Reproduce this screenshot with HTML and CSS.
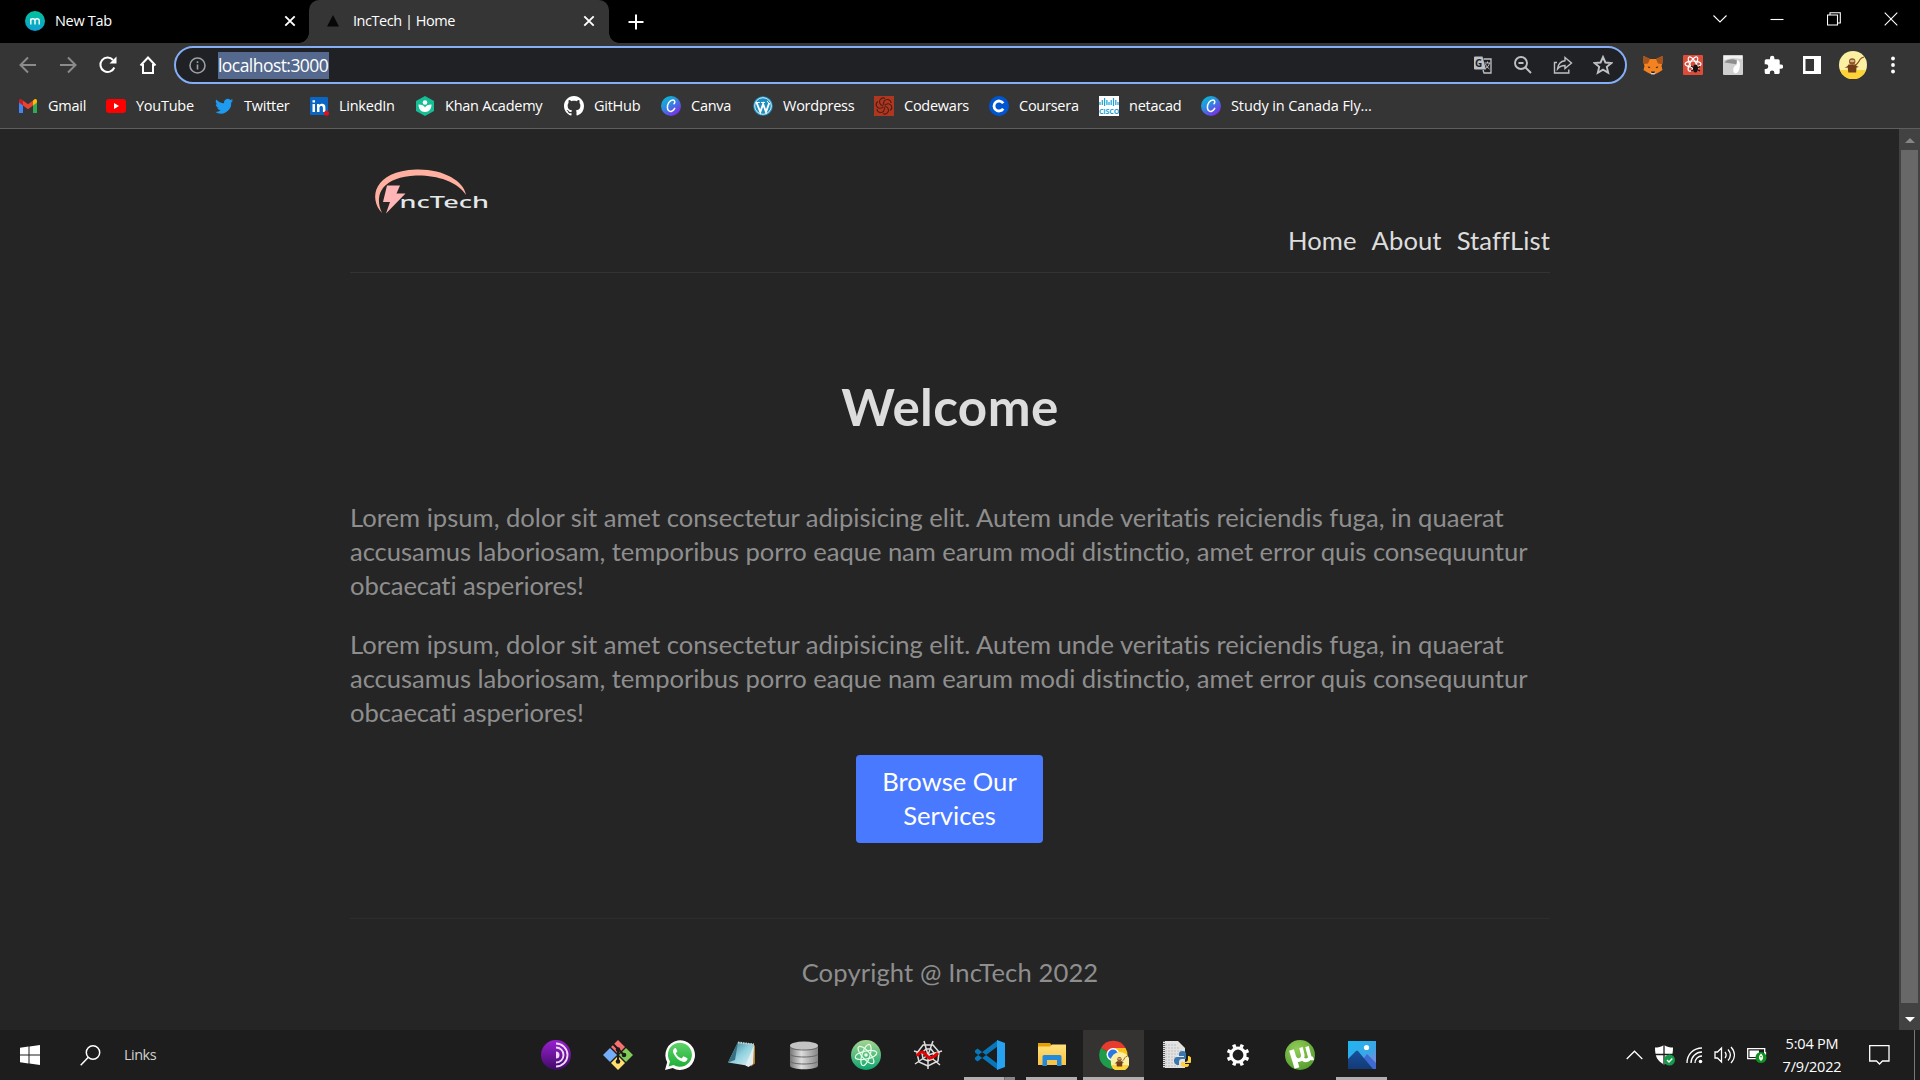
FILE: index.html
```html
<!DOCTYPE html>
<html lang="en">
<head>
<meta charset="utf-8">
<title>IncTech | Home</title>
<link rel="stylesheet" href="styles.css">
</head>
<body>
<svg class="defs" width="0" height="0">
  <defs>
    <linearGradient id="teal" x1="0" y1="0" x2="0" y2="1"><stop offset="0" stop-color="#00c29a"/><stop offset="1" stop-color="#0f9fd6"/></linearGradient>
    <linearGradient id="canvaBg" x1="0" y1="0" x2=".7" y2="1"><stop offset="0" stop-color="#00c8cf"/><stop offset=".45" stop-color="#2a8fe0"/><stop offset="1" stop-color="#7d2ae8"/></linearGradient>
    <linearGradient id="torBg" x1="0" y1="0" x2="0" y2="1"><stop offset="0" stop-color="#9a1fd0"/><stop offset="1" stop-color="#3f0c66"/></linearGradient>
    <linearGradient id="waBg" x1="0" y1="0" x2="0" y2="1"><stop offset="0" stop-color="#5fd36a"/><stop offset="1" stop-color="#20b038"/></linearGradient>
    <linearGradient id="npBg" x1="0" y1="0" x2="1" y2="1"><stop offset="0" stop-color="#2c7184"/><stop offset=".5" stop-color="#8fd0de"/><stop offset="1" stop-color="#e4f5f8"/></linearGradient>
    <linearGradient id="dbBg" x1="0" y1="0" x2="1" y2="0"><stop offset="0" stop-color="#777"/><stop offset=".4" stop-color="#ddd"/><stop offset="1" stop-color="#858585"/></linearGradient>
    <linearGradient id="atomBg" x1="0" y1="0" x2="0" y2="1"><stop offset="0" stop-color="#a5d491"/><stop offset="1" stop-color="#0ca56f"/></linearGradient>
    <linearGradient id="folder" x1="0" y1="0" x2="0" y2="1"><stop offset="0" stop-color="#ffe07d"/><stop offset="1" stop-color="#fbc340"/></linearGradient>
    <linearGradient id="sky" x1="0" y1="0" x2="1" y2="1"><stop offset="0" stop-color="#1db7f2"/><stop offset=".6" stop-color="#3da5e6"/><stop offset="1" stop-color="#a07bd8"/></linearGradient>
    <linearGradient id="hill" x1="0" y1="0" x2="0" y2="1"><stop offset="0" stop-color="#17519c"/><stop offset="1" stop-color="#133a75"/></linearGradient>
    <radialGradient id="utBg" cx=".4" cy=".3" r=".8"><stop offset="0" stop-color="#93cc58"/><stop offset="1" stop-color="#4f9a2a"/></radialGradient>
    <symbol id="canva" viewBox="0 0 20 20"><circle cx="10" cy="10" r="10" fill="url(#canvaBg)"/><path d="M13 7.800c1.300-1.500 1-3.900-1-3.900-3.200 0-5.800 4.200-5.600 7.700.1 2.900 2.100 4.400 4.300 3.600 1.400-.5 2.400-1.600 3-2.800" fill="none" stroke="#fff" stroke-width="1.500" stroke-linecap="round"/></symbol>
    <symbol id="bear" viewBox="0 0 28 28"><circle cx="14" cy="14" r="14" fill="#faefa2"/><path d="M.8 19h26.400A14 14 0 0 1 .8 19z" fill="#fdd33a"/><path d="M9.500 13.500h7.500l.5 1.500 2.500 1-2.500.5-.4 5H9.300l-.6-5-3 .5 2.800-2z" fill="#713c17"/><circle cx="13.200" cy="10.500" r="3.200" fill="#8f5425"/><ellipse cx="13.200" cy="10" rx="2.400" ry="1.300" fill="#d6b08a"/><path d="M15.500 14.500c3-1 4-3 5.500-6 1-1.500 2-2 4-2.500" stroke="#8a4f20" stroke-width="1.200" fill="none"/></symbol>
  </defs>
</svg>
<div class="screen">
  <div class="tabstrip">
    <div class="tab">
      <svg class="fav" width="20" height="20" viewBox="0 0 20 20"><circle cx="10" cy="10" r="10" fill="url(#teal)"/><path d="M5.800 13.500V7.500M5.800 9.500c0-2.400 4.200-2.400 4.200 0v4M10 9.500c0-2.400 4.200-2.400 4.200 0v4" fill="none" stroke="#fff" stroke-width="1.400"/></svg>
      <span class="tab-title">New Tab</span>
      <svg class="tab-x" width="12" height="12" viewBox="0 0 12 12"><path d="M1.300 1.300l9.400 9.400M10.700 1.300L1.300 10.700"/></svg>
    </div>
    <div class="tab tab-active">
      <svg class="fav" width="20" height="20" viewBox="0 0 20 20"><path d="M10 4l6 11.500H4z" fill="#070707"/></svg>
      <span class="tab-title">IncTech | Home</span>
      <svg class="tab-x" width="12" height="12" viewBox="0 0 12 12"><path d="M1.300 1.300l9.400 9.400M10.700 1.300L1.300 10.700"/></svg>
    </div>
    <svg class="plus" width="16" height="16" viewBox="0 0 16 16"><path d="M8 .5v15M.5 8h15"/></svg>
    <div class="win">
      <svg width="14" height="10" viewBox="0 0 14 10"><path d="M.5 1.500L7 8l6.500-6.500"/></svg>
      <svg width="14" height="14" viewBox="0 0 14 14"><path d="M.5 7.500h13"/></svg>
      <svg width="14" height="14" viewBox="0 0 14 14"><path d="M.5 3h10v10H.5zM3 3V.7h10.300V11h-2.600"/></svg>
      <svg width="14" height="14" viewBox="0 0 14 14"><path d="M.7.7l12.600 12.600M13.300.7L.7 13.300"/></svg>
    </div>
  </div>

  <div class="toolbar">
    <div class="navbtns">
      <svg width="20" height="20" viewBox="0 0 20 20" class="dim"><path d="M18 10H3M10 2.500L2.500 10l7.500 7.500"/></svg>
      <svg width="20" height="20" viewBox="0 0 20 20" class="dim"><path d="M2 10h15M10 2.500l7.500 7.500-7.500 7.500"/></svg>
      <svg width="20" height="20" viewBox="0 0 20 20"><path d="M16.300 12.500A7.200 7.200 0 1 1 15 5" /><path d="M18.500 1.500v7h-7z" class="solid"/></svg>
      <svg width="20" height="20" viewBox="0 0 20 20"><path d="M2.500 10.500L10 2.500l7.500 8M5 9v9h10V9"/></svg>
    </div>
    <div class="omnibox">
      <svg class="info" width="17" height="17" viewBox="0 0 17 17"><circle cx="8.500" cy="8.500" r="7.500"/><path d="M8.500 7.500v5M8.500 4.300v1.800"/></svg>
      <span class="url">localhost:3000</span>
      <div class="omni-icons">
        <svg width="20" height="20" viewBox="0 0 20 20"><path d="M2 1.500h7.500l3.500 13H2a1 1 0 0 1-1-1v-11a1 1 0 0 1 1-1z" fill="#bdc1c6"/><path d="M10.500 4H18v14h-7l-1-3" fill="none" stroke="#bdc1c6" stroke-width="1.300"/><text x="2" y="11.500" class="g-letter">G</text><path d="M11.500 8h6M14.500 6.500V8M16.500 8c-.5 2.500-2 4-4 5.500M12.500 9c1 2.500 2 3.700 4 5" fill="none" stroke="#bdc1c6"/></svg>
        <svg width="20" height="20" viewBox="0 0 20 20" class="line"><circle cx="8" cy="8" r="6"/><path d="M12.500 12.500l5.500 5.500M5.500 8h5"/></svg>
        <svg width="20" height="20" viewBox="0 0 20 20" class="line thin"><path d="M4 7.500H1.500V18h14.300v-3.500M12 2.500l6.500 5.500-6.500 5.500V10.500c-3.500 0-5.500 1-7.500 3.500.5-4.500 3-7.800 7.500-8.300z"/></svg>
        <svg width="20" height="20" viewBox="0 0 20 20" class="line"><path d="M10 2l2.400 5.500 6 .5-4.600 3.900 1.400 5.800L10 14.600l-5.200 3.100 1.400-5.800L1.600 8l6-.5z"/></svg>
      </div>
    </div>
    <div class="exts">
      <svg width="22" height="22" viewBox="0 0 22 22"><path d="M1.500 2l6.500 3h6l6.500-3v7l-1 3 1 4-4 2.500-3 1.500h-5l-3-1.500-4-2.500 1-4-1-3z" fill="#f58220"/><path d="M1.500 2L8 5 6 9.500 2 10zM20.500 2L14 5l2 4.500 4 .5z" fill="#a8521c"/><path d="M8.500 18h5l-.8 2.500H9.300z" fill="#d9cfc6"/><path d="M5.500 12.500l3 .5-1.500 1.200zM16.500 12.500l-3 .5 1.500 1.200zM9 17.500h4l-.5 1.500h-3z" fill="#222"/></svg>
      <svg width="20" height="20" viewBox="0 0 20 20"><rect width="20" height="20" rx="1" fill="#dd4b39"/><g fill="none" stroke="#fff" stroke-width="1.200"><ellipse cx="10" cy="9" rx="8" ry="3"/><ellipse cx="10" cy="9" rx="8" ry="3" transform="rotate(60 10 9)"/><ellipse cx="10" cy="9" rx="8" ry="3" transform="rotate(120 10 9)"/></g><ellipse cx="12.500" cy="13.500" rx="2.500" ry="4" fill="#1d1010"/><path d="M8 11l9 5M8 16l9-4.500" stroke="#1d1010" stroke-width="1.200"/></svg>
      <svg width="20" height="20" viewBox="0 0 20 20"><rect width="20" height="20" rx="1" fill="#cfcfcf"/><path d="M1 1h18v3L10 3 1 5z" fill="#f2f2f2"/><path d="M1.500 7.500C4 4 10 3.500 14 5.500l1 4.500-3-1z" fill="#8d8d8d"/><path d="M14 5c3 1 3.500 4 2.500 8-.5 3-2 5.500-4.500 5.500-3-2-2-7 1.500-9z" fill="#fff"/></svg>
      <svg width="20" height="20" viewBox="0 0 20 20"><path d="M18 9.500h-1.300V5.800a1.600 1.600 0 0 0-1.600-1.600h-3.700V3a2.200 2.200 0 0 0-4.400 0v1.200H3.300a1.600 1.600 0 0 0-1.600 1.600v3.500H3a2.300 2.300 0 0 1 0 4.600H1.700v3.500A1.600 1.600 0 0 0 3.300 19h3.500v-1.300a2.300 2.300 0 0 1 4.600 0V19h3.700a1.600 1.600 0 0 0 1.600-1.600v-3.600H18a2.100 2.100 0 0 0 0-4.300z" fill="#fff"/></svg>
      <svg width="18" height="18" viewBox="0 0 18 18"><path d="M0 0h18v18H0zM2.500 3v12h8.500V3z" fill="#fff" fill-rule="evenodd"/></svg>
      <svg width="28" height="28"><use href="#bear"/></svg>
      <svg width="4" height="18" viewBox="0 0 4 18"><g fill="#fff"><circle cx="2" cy="2.500" r="1.900"/><circle cx="2" cy="9" r="1.900"/><circle cx="2" cy="15.500" r="1.900"/></g></svg>
    </div>
  </div>

  <div class="bookmarks">
    <div class="bm"><svg viewBox="0 0 20 20"><path d="M1 17V5l4 3v9z" fill="#4285f4"/><path d="M15 17V8l4-3v12z" fill="#34a853"/><path d="M15 4.500l1.500-1.200C18 2.300 19 3.500 19 5v1.500L15 9.500z" fill="#fbbc04"/><path d="M5 4.500l5 3.800 5-3.800v5l-5 3.800-5-3.800z" fill="#ea4335"/><path d="M1 5c0-1.500 1-2.700 2.500-1.700L5 4.500v5L1 6.500z" fill="#c5221f"/></svg><span>Gmail</span></div>
    <div class="bm"><svg viewBox="0 0 20 20"><rect y="3" width="20" height="14" rx="3" fill="#f00"/><path d="M8 7l5 3-5 3z" fill="#fff"/></svg><span>YouTube</span></div>
    <div class="bm"><svg viewBox="0 0 24 24"><path fill="#1d9bf0" d="M23 5.500a9 9 0 0 1-2.500.7 4.500 4.500 0 0 0 1.900-2.500 9 9 0 0 1-2.800 1.100 4.500 4.500 0 0 0-7.600 4A12.600 12.600 0 0 1 2.800 4.200a4.500 4.500 0 0 0 1.400 6 4.400 4.400 0 0 1-2-.6 4.500 4.500 0 0 0 3.500 4.400 4.500 4.500 0 0 1-2 .1 4.500 4.500 0 0 0 4.200 3A9 9 0 0 1 1.200 19 12.600 12.600 0 0 0 20.700 7.800 9 9 0 0 0 23 5.500z"/></svg><span>Twitter</span></div>
    <div class="bm"><svg viewBox="0 0 20 20"><rect x="1" y="1" width="18" height="18" rx="1" fill="#0a66c2"/><path d="M3.500 8h2.500v8H3.500zM3.500 4.200h2.500v2.300H3.500zM8 8h2.400v1.200c1.500-2.200 6-1.900 6 2V16h-2.500v-4.300c0-2.300-3.400-2.300-3.400 0V16H8z" fill="#fff"/><circle cx="17.500" cy="17.300" r="2.500" fill="#e01020"/></svg><span>LinkedIn</span></div>
    <div class="bm"><svg viewBox="0 0 20 20"><path d="M10 0l9 5v10l-9 5-9-5V5z" fill="#14bf96"/><circle cx="10" cy="6.500" r="2.300" fill="#fff"/><path d="M3.500 8.500c3.500 0 5.500 1 6.500 3 1-2 3-3 6.500-3 0 4-2 7.500-6.500 7.500s-6.500-3.500-6.500-7.500z" fill="#fff"/></svg><span>Khan Academy</span></div>
    <div class="bm"><svg viewBox="0 0 16 16"><path fill="#fff" d="M8 0C3.580 0 0 3.580 0 8c0 3.540 2.290 6.530 5.470 7.590.4.070.55-.17.55-.38 0-.19-.01-.82-.01-1.490-2.010.37-2.530-.49-2.690-.94-.09-.23-.48-.94-.82-1.130-.28-.15-.68-.52-.01-.53.63-.01 1.080.58 1.230.82.72 1.210 1.870.87 2.330.66.07-.52.28-.87.51-1.070-1.780-.2-3.640-.89-3.640-3.950 0-.87.31-1.590.82-2.150-.08-.2-.36-1.020.08-2.120 0 0 .67-.21 2.200.82.64-.18 1.320-.27 2-.27s1.360.09 2 .27c1.530-1.040 2.200-.82 2.200-.82.44 1.100.16 1.920.08 2.120.51.56.82 1.270.82 2.150 0 3.070-1.870 3.750-3.650 3.950.29.25.54.73.54 1.480 0 1.070-.01 1.930-.01 2.200 0 .21.15.46.55.38A8.010 8.010 0 0 0 16 8c0-4.420-3.580-8-8-8z"/></svg><span>GitHub</span></div>
    <div class="bm"><svg viewBox="0 0 20 20"><use href="#canva"/></svg><span>Canva</span></div>
    <div class="bm"><svg viewBox="0 0 20 20"><circle cx="10" cy="10" r="9.800" fill="#1f8fc0"/><circle cx="10" cy="10" r="8.300" fill="none" stroke="#d8eef7" stroke-width="1"/><path d="M3.500 6.500L7.300 16l2.800-8 2.900 8 3.200-9" fill="none" stroke="#fff" stroke-width="1.900"/><path d="M2.800 6.500h4M8 6.500h4M14 5l2 2.500" stroke="#fff"/></svg><span>Wordpress</span></div>
    <div class="bm"><svg viewBox="0 0 20 20"><rect width="20" height="20" fill="#b1361e"/><g fill="none" stroke="#472018" stroke-width="1.100"><path id="cw" d="M10 9c-1.500-3 1-6 4-5.500 2 .5 3 2 3 3.500"/><use href="#cw" transform="rotate(60 10 10)"/><use href="#cw" transform="rotate(120 10 10)"/><use href="#cw" transform="rotate(180 10 10)"/><use href="#cw" transform="rotate(240 10 10)"/><use href="#cw" transform="rotate(300 10 10)"/></g></svg><span>Codewars</span></div>
    <div class="bm"><svg viewBox="0 0 20 20"><circle cx="10" cy="10" r="10" fill="#0056d2"/><path d="M14.200 7.300a5 5 0 1 0 0 5.400" fill="none" stroke="#fff" stroke-width="2.800"/></svg><span>Coursera</span></div>
    <div class="bm"><svg viewBox="0 0 20 20"><rect width="20" height="20" fill="#fff"/><path d="M1 6v3M3.300 4v5M5.600 2v8M7.900 4v5M10 6v3M12.200 4v5M14.500 2v8M16.800 4v5M19 6v3" stroke="#1ba0d7" stroke-width="1.200"/><text x="0" y="17.500" textLength="20" class="cisco">CISCO</text></svg><span>netacad</span></div>
    <div class="bm bm-long"><svg viewBox="0 0 20 20"><use href="#canva"/></svg><span>Study in Canada Fly...</span></div>
  </div>

  <div class="viewport">
    <div class="page">
      <header class="site-header">
        <svg class="logo" width="140" height="60" viewBox="0 0 140 60"><path d="M32 53C18 38 24 11 66 9.500c26-1 48 11 50 25.500C107 21 86 15 66 15.500 34 17 23 33 32 53z" fill="#ffb0a0"/><path d="M37 25.500h13l-3.500 8H55.500L36 53.500l4-11.500h-7z" fill="#ffb5b5"/><text x="49.500" y="47.700" textLength="89.500" lengthAdjust="spacingAndGlyphs" class="logo-text">ncTech</text></svg>
        <nav class="site-nav"><a>Home</a><a>About</a><a>StaffList</a></nav>
      </header>
      <main>
        <h1>Welcome</h1>
        <p><span class="l1">Lorem ipsum, dolor sit amet consectetur adipisicing elit. Autem unde veritatis reiciendis fuga, in quaerat</span><span class="l2">accusamus laboriosam, temporibus porro eaque nam earum modi distinctio, amet error quis consequuntur</span><span class="l3">obcaecati asperiores!</span></p>
        <p><span class="l1">Lorem ipsum, dolor sit amet consectetur adipisicing elit. Autem unde veritatis reiciendis fuga, in quaerat</span><span class="l2">accusamus laboriosam, temporibus porro eaque nam earum modi distinctio, amet error quis consequuntur</span><span class="l3">obcaecati asperiores!</span></p>
        <a class="btn">Browse Our<br>Services</a>
      </main>
      <footer class="site-footer"><span>Copyright @ IncTech 2022</span></footer>
    </div>
    <div class="scrollbar">
      <svg width="10" height="5" viewBox="0 0 10 5"><path d="M0 5l5-5 5 5z" fill="#858585"/></svg>
      <div class="thumb"></div>
      <svg width="10" height="5" viewBox="0 0 10 5"><path d="M0 0l5 5 5-5z" fill="#fff"/></svg>
    </div>
  </div>

  <div class="taskbar">
    <svg class="start" width="20" height="20" viewBox="0 0 20 20"><path d="M0 2.800l8.500-1.200v8H0zM9.500 1.400L20 0v9.600H9.500zM0 10.500h8.500v8L0 17.300zM9.500 10.500H20V20L9.500 18.600z" fill="#fff"/></svg>
    <svg class="search" width="21" height="21" viewBox="0 0 21 21"><circle cx="13" cy="7.500" r="6.700"/><path d="M8.300 12.300L.7 20.300"/></svg>
    <span class="links">Links</span>
    <div class="apps">
      <div class="app"><svg viewBox="0 0 30 30"><circle cx="15" cy="15" r="15" fill="url(#torBg)"/><g fill="none" stroke="#f0d9fb" stroke-width="1.900"><path d="M15 3.500a11.500 11.500 0 0 1 0 23M15 7.500a7.500 7.500 0 0 1 0 15"/></g><path d="M15 11.500a3.500 3.500 0 0 1 0 7z" fill="#f0d9fb"/></svg></div>
      <div class="app"><svg viewBox="0 0 30 30"><path d="M15 0l7 7-7 7-7-7z" fill="#f8716f"/><path d="M23 8l7 7-7 7-7-7z" fill="#80cc59"/><path d="M7 8l7 7-7 7-7-7z" fill="#74adf8"/><path d="M15 16l7 7-7 7-7-7z" fill="#fedf70"/><path d="M10 4l5 5v12M15 9l6 6" stroke="#1c1c1c" stroke-width="2" fill="none"/><g fill="#1c1c1c"><circle cx="15" cy="9.500" r="2.300"/><circle cx="21" cy="15" r="2.300"/><circle cx="15" cy="21.500" r="2.300"/></g></svg></div>
      <div class="app"><svg viewBox="0 0 30 30"><path d="M0 30l2.200-7.700A14.800 14.800 0 1 1 7.800 28z" fill="#fff"/><path d="M3.500 26.500l1.500-5A12 12 0 1 1 8.700 25z" fill="url(#waBg)"/><path d="M10 8c-2 1.200-2.600 3-1.500 5.300 2.200 4.500 5 7 9.300 8.500 2.400.7 5-1 4.700-3.500l-4-2-2 2.300c-2.700-1-4.600-3-5.700-5.300l1.600-2-1.600-3.300z" fill="#fff"/></svg></div>
      <div class="app"><svg viewBox="0 0 30 30"><path d="M25 4.500l3 1v18l-4 3z" fill="#bb8128"/><path d="M11 2l16 2-4 22-22-3.500z" fill="url(#npBg)"/><path d="M11 2L8 20l-7 2.500z" fill="#376f80"/><path d="M27 5l-1 19-4.500 3-3-1.500z" fill="#e0eff1"/><path d="M11 2.500l16 2" stroke="#c4cdd0" stroke-width="2" stroke-dasharray="1.500 1"/></svg></div>
      <div class="app"><svg viewBox="0 0 30 30"><path d="M1 5.500v20c0 5 28 5 28 0v-20z" fill="url(#dbBg)"/><ellipse cx="15" cy="5.500" rx="14" ry="4" fill="#c4c4c4"/><path d="M1 7c1 4 27 4 28 0M1 14c1 4 27 4 28 0M1 21c1 4 27 4 28 0" fill="none" stroke="#666" stroke-width="1"/></svg></div>
      <div class="app"><svg viewBox="0 0 30 30"><circle cx="15" cy="15" r="15" fill="url(#atomBg)"/><g fill="none" stroke="#e5ffe9" stroke-width="1.200"><ellipse cx="15" cy="15" rx="11" ry="4" transform="rotate(-12 15 15)"/><ellipse cx="15" cy="15" rx="11" ry="4" transform="rotate(48 15 15)"/><ellipse cx="15" cy="15" rx="11" ry="4" transform="rotate(108 15 15)"/></g><circle cx="15" cy="15" r="1.800" fill="#e5ffe9"/></svg></div>
      <div class="app"><svg viewBox="0 0 30 30"><g fill="none" stroke="#ddd" stroke-width="1.500"><path d="M15 15V29M15 15L2 24M15 15L1 11M15 15L11 1M15 15L20 1M15 15l14-4M15 15l12 10"/><path d="M15 26l-9-4-2-9 6-8 10 0 6 7-1 9zM15 21l-5-2-1-6 4-4 5 0 3 4-1 6z"/></g><path d="M4 16c3-5 6-5 9-1s6 4 12-2" fill="none" stroke="#e60000" stroke-width="3"/></svg></div>
      <div class="app run grouped"><svg viewBox="0 0 30 30"><path d="M0 10.500L2.500 8.500 23 24v6L0 12.500zM0 19.500l2.500 2L23 6V0L0 17.500z" fill="#0877b9"/><path d="M22 0l8 3v24l-8 3z" fill="#26a2f0"/></svg></div>
      <div class="app run"><svg viewBox="0 0 30 30"><path d="M1 3h12l2 3v6H1z" fill="#e3a000"/><path d="M1 6.500h12l2-2h14V25H1z" fill="url(#folder)"/><path d="M5.500 26V16.500q0-1.500 1.500-1.500h16q1.500 0 1.500 1.500V26H20v-6h-10v6z" fill="#2589db"/><path d="M10 20h10v3H10z" fill="#f6c44a"/></svg></div>
      <div class="app run active"><svg viewBox="0 0 30 30"><path d="M14 15L2 8a14 14 0 0 1 24.500 0z" fill="#e63b2e"/><path d="M14 15L2 8a14 14 0 0 0 12 21z" fill="#1e9b4b"/><path d="M14 15V29A14 14 0 0 0 26.500 8H14z" fill="#fcc31e"/><circle cx="14" cy="14.500" r="6.500" fill="#fff"/><circle cx="14" cy="14.500" r="5" fill="#2b76e5"/><svg class="badge" x="11.500" y="12" width="19" height="19"><use href="#bear" width="19" height="19"/></svg></svg></div>
      <div class="app"><svg viewBox="0 0 30 30"><path d="M2 1h15l7 7v20H2z" fill="#e2e2e2"/><path d="M4 5h12M4 8h15M4 11h17M4 14h15M4 17h10M4 20h10M4 23h13M4 26h13" stroke="#bdbdbd" stroke-dasharray="2 1"/><path d="M3 1v27" stroke="#333" stroke-width="1.500" stroke-dasharray="1 1"/><path d="M22 11c-3 0-4 1-4 3v2h5v1h-7c-4 0-4 7 0 8h2v-3c0-2 1-3 3-3h4v-5c0-2-1-3-3-3z" fill="#3976ab"/><path d="M25 27c3 0 3-1.500 3-3h-5v-1h6c3-1 2-6-1-7h-1v3c0 2-1 3-3 3h-4v3c0 1.500 2 2 5 2z" fill="#ffd03e"/></svg></div>
      <div class="app"><svg viewBox="0 0 30 30"><circle cx="15" cy="15" r="7" fill="none" stroke="#fff" stroke-width="3.200"/><g stroke="#fff" stroke-width="3.500"><path d="M15 23v3.300M15 7V3.700" transform="rotate(22.500 15 15)"/><path d="M15 23v3.300M15 7V3.700" transform="rotate(67.500 15 15)"/><path d="M15 23v3.300M15 7V3.700" transform="rotate(112.500 15 15)"/><path d="M15 23v3.300M15 7V3.700" transform="rotate(157.500 15 15)"/></g></svg></div>
      <div class="app"><svg viewBox="0 0 30 30"><circle cx="15" cy="15" r="15" fill="url(#utBg)"/><path d="M6.500 10L12 28" fill="none" stroke="#fff" stroke-width="5"/><path d="M9 16.500c2 5.500 9.500 4.500 8.800-1.500L16 7.500M22 6.500l2.500 9.500c.5 2 2 3 4 2.300M16.500 17c2 4.500 7 4.500 8.500 0" fill="none" stroke="#fff" stroke-width="3.600"/></svg></div>
      <div class="app run"><svg viewBox="0 0 30 30"><path d="M1 1h28v28H1z" fill="url(#sky)"/><circle cx="19.500" cy="7.500" r="2.600" fill="#fff"/><path d="M20 14l9 9v6H9z" fill="#3d6bd0"/><path d="M1 19l8-8q1-1 2 0l15 18H1z" fill="url(#hill)"/></svg></div>
    </div>
    <div class="tray">
      <svg width="17" height="10" viewBox="0 0 17 10"><path d="M.7 9L8.500 1.200 16.300 9"/></svg>
      <svg width="21" height="21" viewBox="0 0 21 21"><path d="M10 0c3 2 6 2.500 9 2.500C19 11 17 16 10 19.500 3 16 1 11 1 2.500 4 2.500 7 2 10 0z" fill="#fff" stroke="none"/><path d="M10 0v19M1 9.500h18" stroke="#1d1d1d"/><circle cx="15.500" cy="15" r="5.500" fill="#149a4a" stroke="none"/><path d="M13 15l2 2 3.300-3.500" stroke="#fff"/></svg>
      <svg width="17" height="17" viewBox="0 0 17 17"><path d="M1 16C1 7.500 7.500 1 16 1M5 16C5 10 10 5 16 5M9 16c0-4 3-7 7-7"/><circle cx="14.500" cy="14.500" r="1.800" fill="#fff" stroke="none"/></svg>
      <svg width="22" height="18" viewBox="0 0 22 18"><path d="M1 6h2.500l4-4v14l-4-4H1zM11 6c1.500 2 1.500 4 0 6M14 3.500c3 3.500 3 7.500 0 11M17 1c4.500 5 4.500 11 0 16"/></svg>
      <svg width="20" height="16" viewBox="0 0 20 16"><path d="M.7 1.700h17v10H.7zM18.500 5v3"/><path d="M2.500 3.500H12v6.500H2.500z" fill="#fff" stroke="none"/><circle cx="14" cy="10.500" r="5.500" fill="#10911e" stroke="none"/><path d="M14 7.500c-3 3-1 5 0 5s3-2 0-5zM14 10v4" stroke="#fff"/></svg>
      <div class="clock"><span>5:04 PM</span><span>7/9/2022</span></div>
      <svg class="notif" width="21" height="20" viewBox="0 0 21 20"><path d="M.7.7h19.300v15.300h-6.500L10.500 19l-3-3H.7z"/></svg>
      <div class="peek"></div>
    </div>
  </div>
</div>
</body>
</html>
```
FILE: styles.css
```css
* { box-sizing: border-box; }
body { margin: 0; background: #252525; overflow: hidden; font-family: "Open Sans", "Noto Sans", sans-serif; color: #fff; }
svg { display: block; flex: none; }
.defs { position: absolute; }
.screen { width: 1920px; height: 1080px; display: flex; flex-direction: column; }

.tabstrip { height: 43px; background: #000; display: flex; align-items: center; flex: none; }
.tab { height: 43px; display: flex; align-items: center; width: 309px; padding: 0 13px 2px 25px; font-size: 14.5px; letter-spacing: -0.3px; }
.tab-active { width: 300px; padding: 0 14px 2px 14px; background: #353535; border-radius: 10px 10px 0 0; position: relative; letter-spacing: -0.45px; }
.tab-active::before, .tab-active::after { content: ""; position: absolute; bottom: 0; width: 10px; height: 10px; }
.tab-active::before { left: -10px; background: radial-gradient(circle at 0 0, #000 9.5px, #353535 10px); }
.tab-active::after { right: -10px; background: radial-gradient(circle at 100% 0, #000 9.5px, #353535 10px); }
.tab-title { margin-left: 10px; flex: 1; white-space: nowrap; }
.tab-x { fill: none; stroke: #fff; stroke-width: 1.9; }
.plus { margin-left: 19px; fill: none; stroke: #fff; stroke-width: 2; }
.win { margin-left: auto; display: flex; align-items: center; gap: 43px; padding-right: 22px; margin-top: -6px; fill: none; stroke: #fff; stroke-width: 1.1; }

.toolbar { height: 45px; background: #353535; display: flex; align-items: center; padding: 0 0 1px 18px; flex: none; }
.navbtns { display: flex; gap: 20px; width: 156px; fill: none; stroke: #fff; stroke-width: 2; }
.navbtns .dim { stroke: #8b8b8b; }
.navbtns .solid { fill: #fff; stroke: none; }
.omnibox { width: 1453px; height: 38px; border: 2.5px solid #85aef6; border-radius: 19px; background: #202124; display: flex; align-items: center; padding: 0 12px 0 13px; }
.info { fill: none; stroke: #9aa0a6; stroke-width: 1.6; }
.url { margin-left: 12px; width: 111px; height: 27px; line-height: 26px; background: #54698d; font-size: 17.5px; letter-spacing: -0.55px; white-space: nowrap; }
.omni-icons { margin-left: auto; display: flex; gap: 20px; }
.line { fill: none; stroke: #bdc1c6; stroke-width: 1.9; }
.thin { stroke-width: 1.4; }
.g-letter { font: bold 10px "Open Sans", sans-serif; fill: #202124; }
.exts { display: flex; align-items: center; gap: 20px; margin-left: 15px; }
.exts svg:nth-child(2) { margin-left: -1px; }
.exts svg:nth-child(6) { margin-left: -2px; }
.exts svg:nth-child(7) { margin-left: 4px; }

.bookmarks { height: 41px; background: #353535; border-bottom: 1px solid #5e5e5e; flex: none; display: grid; padding-left: 18px; align-items: center;
  grid-template-columns: 88px 108px 95px 106px 149px 97px 92px 121px 115px 110px 102px 200px; }
.bm { display: flex; align-items: center; gap: 10px; font-size: 14.5px; letter-spacing: -0.25px; white-space: nowrap; padding-bottom: 5px; }
.bm svg { width: 20px; height: 20px; }
.bm-long { letter-spacing: -0.1px; }
.cisco { font: bold 7px "Open Sans", sans-serif; fill: #1ba0d7; }

.viewport { flex: 1; display: flex; background: #252525; }
.page { width: 1899px; padding: 0 349px 0 350px; font-family: Lato, "Open Sans", sans-serif; font-size: 25.6px; line-height: 34px; color: #8e8e8e; font-variant-ligatures: none; }
.site-header { height: 144px; border-bottom: 1px solid #333; padding-top: 31px; display: flex; flex-direction: column; }
.logo { display: block; }
.logo-text { font: 500 15.5px "Noto Sans", sans-serif; fill: #e4e8e8; }
.site-nav { display: flex; justify-content: flex-end; gap: 15px; color: #ddd; margin-top: 3px; letter-spacing: 0.1px; }
main { display: flex; flex-direction: column; align-items: center; height: 645px; }
h1 { margin: 98px 0 0; font-size: 51.2px; line-height: 70px; font-weight: 700; color: #ddd; letter-spacing: 0.4px; }
p { margin: 0; padding-bottom: 25px; width: 1200px; }
h1 + p { margin-top: 59px; }
p span { display: block; white-space: nowrap; width: max-content; }
.l1 { letter-spacing: 0.01px; }
.l2 { letter-spacing: -0.045px; }
.l3 { letter-spacing: -0.1px; }
.btn { width: 187px; height: 88px; margin: 1px 1px 0 0; padding: 9px 0; background: #4979ff; border-radius: 4px; color: #fff; text-align: center; }
.site-footer { border-top: 1px solid #2d2d2d; padding-top: 36px; display: flex; justify-content: center; letter-spacing: 0.12px; }

.scrollbar { width: 21px; background: #424242; display: flex; flex-direction: column; align-items: center; padding: 9px 0 8px; justify-content: space-between; }
.thumb { width: 17px; height: 853px; background: #686868; margin-bottom: 8px; }

.taskbar { height: 50px; background: #1d1d1d; display: flex; align-items: center; padding-left: 20px; flex: none; }
.search { margin-left: 40px; fill: none; stroke: #fff; stroke-width: 1.5; }
.links { margin-left: 23px; width: 401px; padding-bottom: 1px; font-size: 14.5px; letter-spacing: -0.5px; color: #d0d0d0; }
.apps { display: flex; gap: 1px; height: 50px; }
.app { width: 61px; height: 50px; display: flex; align-items: center; justify-content: center; position: relative; }
.app > svg { width: 30px; height: 30px; }
.run::after { content: ""; position: absolute; bottom: 0; left: 5px; width: 51px; height: 3px; background: #b3aeae; }
.grouped::after { background: linear-gradient(90deg, #b3aeae 40px, #555 40px, #8a8686 41px); }
.active { background: #353331; }
.active::after { left: 0; width: 61px; }
.tray { margin-left: auto; display: flex; align-items: center; height: 50px; gap: 11px; fill: none; stroke: #fff; stroke-width: 1.3; }
.clock { width: 72px; display: flex; flex-direction: column; align-items: center; font-size: 14.5px; letter-spacing: -0.2px; line-height: 23px; margin-left: -2px; }
.notif { margin-left: 10px; }
.peek { width: 1px; height: 50px; background: #777; margin: 0 5px 0 13px; }
```
